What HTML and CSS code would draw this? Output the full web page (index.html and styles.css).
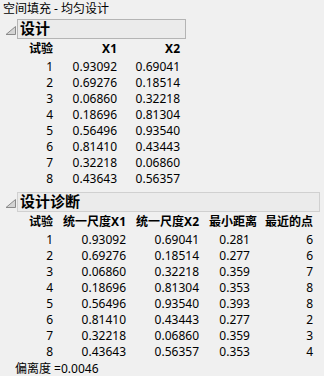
FILE: index.html
```html
<!DOCTYPE html>
<html lang="zh">
<head>
<meta charset="utf-8">
<link rel="stylesheet" href="styles.css">
</head>
<body>
<div class="title">空间填充 - 均匀设计</div>

<div class="section">
  <div class="sec-head">
    <svg class="tri" width="11" height="9" viewBox="0 0 11 9"><path d="M1 8.5 L10.5 8.5 L10.5 0.5 Z" fill="#d4d4d4" stroke="#8a8a8a" stroke-width="1"/></svg>
    <div class="box box1">设计</div>
  </div>
  <div class="grid g1">
    <div class="h">试验</div><div class="h">X1</div><div class="h">X2</div>
    <div>1</div><div>0.93092</div><div>0.69041</div>
    <div>2</div><div>0.69276</div><div>0.18514</div>
    <div>3</div><div>0.06860</div><div>0.32218</div>
    <div>4</div><div>0.18696</div><div>0.81304</div>
    <div>5</div><div>0.56496</div><div>0.93540</div>
    <div>6</div><div>0.81410</div><div>0.43443</div>
    <div>7</div><div>0.32218</div><div>0.06860</div>
    <div>8</div><div>0.43643</div><div>0.56357</div>
  </div>
</div>

<div class="section s2">
  <div class="sec-head">
    <svg class="tri" width="11" height="9" viewBox="0 0 11 9"><path d="M1 8.5 L10.5 8.5 L10.5 0.5 Z" fill="#d4d4d4" stroke="#8a8a8a" stroke-width="1"/></svg>
    <div class="box box2">设计诊断</div>
  </div>
  <div class="grid g2">
    <div class="h">试验</div><div class="h">统一尺度X1</div><div class="h">统一尺度X2</div><div class="h">最小距离</div><div class="h">最近的点</div>
    <div>1</div><div>0.93092</div><div>0.69041</div><div class="d">0.281</div><div>6</div>
    <div>2</div><div>0.69276</div><div>0.18514</div><div class="d">0.277</div><div>6</div>
    <div>3</div><div>0.06860</div><div>0.32218</div><div class="d">0.359</div><div>7</div>
    <div>4</div><div>0.18696</div><div>0.81304</div><div class="d">0.353</div><div>8</div>
    <div>5</div><div>0.56496</div><div>0.93540</div><div class="d">0.393</div><div>8</div>
    <div>6</div><div>0.81410</div><div>0.43443</div><div class="d">0.277</div><div>2</div>
    <div>7</div><div>0.32218</div><div>0.06860</div><div class="d">0.359</div><div>3</div>
    <div>8</div><div>0.43643</div><div>0.56357</div><div class="d">0.353</div><div>4</div>
  </div>
  <div class="footer">偏离度 =0.0046</div>
</div>
</body>
</html>
```

FILE: styles.css
```css
html, body {
  margin: 0;
  padding: 0;
  background: #f0f0f0;
}
body {
  font-family: "Noto Sans", "Noto Sans CJK SC", sans-serif;
  font-size: 12px;
  color: #000;
  width: 324px;
  height: 376px;
  overflow: hidden;
}
.title {
  padding: 1px 0 0 3px;
  height: 17px;
  line-height: 16px;
}
.section {
  margin-top: 1px;
}
.s2 {
  margin-top: 5px;
}
.sec-head {
  display: flex;
  align-items: flex-end;
  height: 20px;
}
.tri {
  display: block;
  margin: 0 1px 4px 5px;
}
.box {
  box-sizing: border-box;
  height: 20px;
  border: 1px solid #b4b4b4;
  background: #ebebeb;
  font-weight: bold;
  font-size: 15px;
  line-height: 17px;
  padding-left: 2px;
}
.box1 {
  width: 169px;
}
.box2 {
  width: 303px;
  border-color: #d0d0d0;
}
.grid {
  display: grid;
  grid-auto-rows: 16px;
  line-height: 16px;
  text-align: right;
  margin-top: 2px;
}
.grid .h {
  font-weight: bold;
  height: 17px;
}
.g1 {
  grid-template-columns: 53px 64px 63px;
  grid-template-rows: 18px;
}
.g2 {
  grid-template-columns: 53px 73px 73px 58px 56px;
  grid-template-rows: 18px;
}
.g2 .d {
  padding-right: 7px;
}
.footer {
  padding-left: 15px;
  line-height: 16px;
  margin-top: 1px;
}
```
